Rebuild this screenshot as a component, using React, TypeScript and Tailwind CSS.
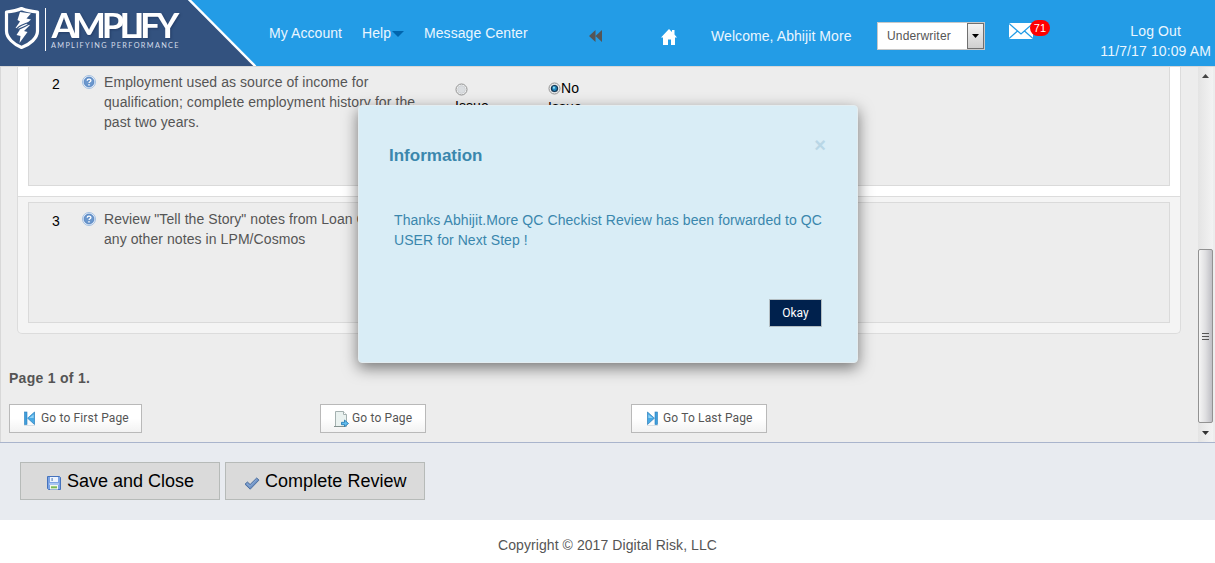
import type { ReactNode } from "react";

function Logo() {
  return (
    <svg className="block h-[66px] w-[257px] shrink-0 tracking-normal" viewBox="0 0 257 66">
      <polygon points="0,0 188,0 255,66 0,66" fill="#33527f" />
      <path d="M188.5 -1 L255.5 66.5" stroke="#fff" strokeWidth="2.4" />
      <path
        d="M21.5 8.500 C17 10.500 11 11.500 6.500 12 V31 C6.500 38 14 44.500 21.500 47.500 C30 44.500 37.500 38 37.500 31 V12 C32 11.500 26 10.500 21.500 8.500Z"
        fill="#33527f"
        stroke="#fff"
        strokeWidth="3.200"
        strokeLinejoin="round"
      />
      <path d="M20 12 L31 13.500 L26.500 18.500 L31 19.500 L26 24 L30 25 L24 31 L27.500 32 L19.500 43 L20.500 36 L16.500 35 L20 29.500 L15.500 28 L20 21.500 L17.500 20Z" fill="#fff" />
      <path d="M15.500 30.500 C17 27 25 23 31 22 C29 26 21 28 15.500 30.500" fill="none" stroke="#33527f" strokeWidth="1.200" />
      <path d="M45.500 8 V51" stroke="#fff" strokeWidth="1" />
      <g fontFamily="Lato, sans-serif">
        <text
          className="drop-shadow-[1px_1px_1px_rgba(20,40,80,0.5)]"
          transform="translate(51.500 38) scale(1.075 1)"
          fontSize="33.500"
          fontWeight="700"
          fill="#fff"
          textLength="119"
          lengthAdjust="spacing"
        >
          AMPLIFY
        </text>
        <text x="51" y="47.500" fontSize="7.300" fill="#d3dcea" textLength="127.500">AMPLIFYING PERFORMANCE</text>
      </g>
    </svg>
  );
}

function HelpIcon() {
  return (
    <svg className="mt-[3px] block size-[14px] shrink-0" viewBox="0 0 14 14">
      <circle cx="7" cy="7" r="6.500" fill="#e6effa" stroke="#a3bfe0" />
      <circle cx="7" cy="7" r="4.900" fill="#6b97cd" stroke="#4f7fbd" strokeWidth="0.800" />
      <path d="M5.200 5.700 C5.200 3.600 8.900 3.600 8.900 5.600 C8.900 6.800 7 6.800 7 8.100" fill="none" stroke="#fff" strokeWidth="1.300" />
      <rect x="6.300" y="9.100" width="1.400" height="1.400" fill="#fff" />
    </svg>
  );
}

function Radio({ checked = false }: { checked?: boolean }) {
  return (
    <svg className="block size-[13px] shrink-0" viewBox="0 0 13 13">
      <circle cx="6.500" cy="6.500" r="5.500" fill="#f6f6f6" stroke="#8e8f8f" />
      <circle cx="6.500" cy="6.500" r="3.900" fill="#dadde0" stroke="#c3c6ca" strokeWidth="0.600" />
      {checked && <circle cx="6.500" cy="6.500" r="3" fill="#2389c0" stroke="#123552" strokeWidth="1.200" />}
      {checked && <circle cx="5.900" cy="5.700" r="1.100" fill="#8fe0f8" />}
    </svg>
  );
}

function SkipIcon({ last = false }: { last?: boolean }) {
  return (
    <svg className={last ? "block h-[15px] w-[11px] -scale-x-100" : "block h-[15px] w-[11px]"} viewBox="0 0 11 15">
      <rect x="0.500" y="1" width="2.500" height="12.500" fill="#3f9fdc" stroke="#2b7ebc" strokeWidth="0.600" />
      <path d="M10.500 1 V13.500 L3.600 7.200Z" fill="#48a9e4" stroke="#2b7ebc" strokeWidth="0.700" />
      <path d="M9.600 3.400 V7 H5.200Z" fill="#91d2f5" />
      <path d="M0 14.500 H11" stroke="#d9e0e5" />
    </svg>
  );
}

function PageIcon() {
  return (
    <svg className="block size-4" viewBox="0 0 16 16">
      <path d="M2.500 0.500 H10.500 L13.500 3.500 V15.500 H2.500Z" fill="#eaf2f0" stroke="#a4b1b0" />
      <path d="M10.500 0.500 V3.500 H13.500" fill="#fff" stroke="#a4b1b0" />
      <path d="M1 15.500 H12" stroke="#84918f" />
      <path d="M8.500 11.300 H11.500 V9 L15.500 12.500 L11.500 15.700 V13.700 H8.500Z" fill="#60bced" stroke="#1c73b0" strokeWidth="0.800" />
    </svg>
  );
}

function SaveIcon() {
  return (
    <svg className="block size-[14px]" viewBox="0 0 14 14">
      <path d="M0.500 0.500 H12.500 L13.500 1.500 V13.500 H1.500 L0.500 12.500Z" fill="#7ba3e4" stroke="#4472bd" />
      <rect x="3" y="1" width="8" height="5" fill="#edf4ff" />
      <rect x="4.500" y="2" width="1.200" height="3" fill="#6689bc" />
      <rect x="2" y="7" width="10" height="2" fill="#a9c5f1" />
      <rect x="3" y="9" width="8" height="4.500" fill="#f3f8ed" />
      <rect x="4" y="10.300" width="6" height="2" fill="#79b957" />
    </svg>
  );
}

function CheckIcon() {
  return (
    <svg className="block h-[13px] w-4" viewBox="0 0 16 13">
      <path d="M1 7.200 L3.400 5 L6.100 7.500 L12.700 1 L15 3.100 L6.200 12.200Z" fill="#6f93c6" stroke="#4d6f9f" strokeWidth="1" strokeLinejoin="round" />
      <path d="M2.800 6.600 L6.100 9.300 L12.700 2.500" fill="none" stroke="#93b1da" strokeWidth="0.900" />
    </svg>
  );
}

function PagerButton({ className, icon, children }: { className: string; icon: ReactNode; children: ReactNode }) {
  return (
    <button className={`flex h-[29px] items-center border border-[#b9b9b9] bg-linear-to-b from-white from-50% to-[#f2f2f2] font-[Roboto,sans-serif] text-[12px] tracking-[0.15px] whitespace-nowrap text-[#555] ${className}`}>
      {icon}
      <span className="pb-[2px]">{children}</span>
    </button>
  );
}

function Header() {
  return (
    <header className="flex h-[66px] bg-[#239ce6] text-[14px] leading-5 tracking-[0.07px] text-[#eaf6ff]">
      <Logo />
      <nav className="flex w-[332px] shrink-0 pt-[23px] pl-3 whitespace-nowrap">
        <span className="w-[93px]">My Account</span>
        <span className="flex w-[62px]">
          Help
          <svg className="mt-2 ml-px block h-[6px] w-3" viewBox="0 0 12 6"><path d="M0 0 H12 L6 6Z" fill="#0065ae" /></svg>
        </span>
        <span>Message Center</span>
      </nav>
      <svg className="mt-[30px] block h-3 w-[13px] shrink-0" viewBox="0 0 13 12"><path d="M6.500 0 V12 L0 6Z M13 0 V12 L6.500 6Z" fill="#555" /></svg>
      <svg className="mt-[29px] ml-[59px] block h-4 w-4 shrink-0" viewBox="0 0 16 16"><path d="M8 0 L11 3 V1 H13.500 V5.500 L16 8.500 H14 V16 H10 V10.500 H7 V16 H2 V8.500 H0Z" fill="#fff" /></svg>
      <span className="mt-[26px] ml-[34px] w-[166px] shrink-0 whitespace-nowrap">Welcome, Abhijit More</span>
      <div className="mt-[22px] flex h-7 w-[108px] shrink-0 border border-[#c8c8c8] bg-white text-[12px] text-[#555]">
        <span className="grow pt-[3px] pl-[9px] tracking-[0.17px]">Underwriter</span>
        <div className="flex w-[17px] items-center justify-center border border-[#707070] bg-linear-to-b from-[#f4f4f4] to-[#cfcfcf]">
          <svg className="block h-1 w-[7px]" viewBox="0 0 7 4"><path d="M0 0 H7 L3.500 4Z" fill="#000" /></svg>
        </div>
      </div>
      <div className="relative mt-[23px] ml-6 h-4 w-6 shrink-0">
        <svg className="block h-4 w-6" viewBox="0 0 24 16">
          <rect width="24" height="16" fill="#fff" />
          <path d="M0 0.500 L12 11 L24 0.500 M0 15.500 L8.500 8 M24 15.500 L15.500 8" fill="none" stroke="#239ce6" strokeWidth="1.300" />
        </svg>
        <span className="absolute top-[-3px] left-[21px] flex h-4 w-5 items-center justify-center rounded-full bg-[#f00] text-[11px] leading-none text-white">71</span>
      </div>
      <div className="mt-[21px] mr-1 ml-auto text-center tracking-[0.12px] whitespace-nowrap">
        <div>Log Out</div>
        <div>11/7/17 10:09 AM</div>
      </div>
    </header>
  );
}

function Scrollbar() {
  return (
    <div className="mr-[2px] flex h-full w-[15px] shrink-0 flex-col items-center bg-linear-to-r from-[#e4e4e4] to-[#f3f3f3]">
      <svg className="mt-[7px] mb-[171px] block h-1 w-[7px] shrink-0" viewBox="0 0 7 4"><path d="M0 4 L3.500 0 L7 4Z" fill="#444" /></svg>
      <div className="flex h-[174px] w-[15px] shrink-0 flex-col items-center justify-center gap-[2px] rounded-[2px] border border-[#929292] bg-linear-to-r from-[#f5f5f5] via-[#dfdfe1] to-[#bfbfc5]">
        <div className="h-px w-[7px] bg-[#555]" />
        <div className="h-px w-[7px] bg-[#555]" />
        <div className="h-px w-[7px] bg-[#555]" />
      </div>
      <svg className="mt-2 block h-1 w-[7px] shrink-0" viewBox="0 0 7 4"><path d="M0 0 H7 L3.500 4Z" fill="#333" /></svg>
    </div>
  );
}

function Checklist() {
  return (
    <main className="flex h-[376px] justify-between overflow-hidden border-t border-l border-[#d8d8d8] bg-[#ededed] text-[14px] leading-5 tracking-[0.075px] text-[#555]">
      <div className="w-[1180px] shrink-0 pl-2">
        <section className="ml-2 w-[1164px] rounded-b-[5px] border-x border-b border-[#dcdcdc] bg-[#f4f4f4]">
          <div className="h-[129px] bg-white px-[10px]">
            <div className="flex h-[119px] border-x border-b border-[#dadada] bg-[#ededed] pt-[5px]">
              <span className="w-[53px] pt-[2px] pl-[23px] text-black">2</span>
              <HelpIcon />
              <p className="ml-2 w-[351px] whitespace-nowrap">Employment used as source of income for<br />qualification; complete employment history for the<br />past two years.</p>
              <div className="w-[93px] pt-[11px] text-black">
                <Radio />
                <div>Issue</div>
              </div>
              <div className="pt-[6px] text-black">
                <div className="flex items-center"><Radio checked />No</div>
                <div className="-mt-px">Issue</div>
              </div>
            </div>
          </div>
          <div className="h-[137px] border-t border-[#dcdcdc] px-[10px] pt-[5px]">
            <div className="flex h-[121px] border border-[#dadada] bg-[#ededed] pt-[6px]">
              <span className="w-[53px] pt-[2px] pl-[23px] text-black">3</span>
              <HelpIcon />
              <p className="ml-2 whitespace-nowrap">Review "Tell the Story" notes from Loan C<br />any other notes in LPM/Cosmos</p>
            </div>
          </div>
        </section>
        <div className="mt-[34px] font-bold tracking-[0.28px]">Page 1 of 1.</div>
        <div className="mt-4 flex">
          <PagerButton className="w-[133px] gap-[6px] pl-[14px]" icon={<SkipIcon />}>Go to First Page</PagerButton>
          <PagerButton className="ml-[178px] w-[106px] gap-[3px] pl-3" icon={<PageIcon />}>Go to Page</PagerButton>
          <PagerButton className="ml-[205px] w-[136px] gap-[5px] pl-[15px]" icon={<SkipIcon last />}>Go To Last Page</PagerButton>
        </div>
      </div>
      <Scrollbar />
    </main>
  );
}

function InformationDialog() {
  return (
    <div role="dialog" className="absolute top-[105px] left-[358px] flex h-[258px] w-[500px] flex-col rounded-[4px] border border-[#e3edf1] bg-[#d9edf6] px-[29px] text-[#3a87ad] shadow-[0_5px_15px_rgba(0,0,0,0.5)]">
      <div className="flex justify-between">
        <h2 className="mt-[38px] ml-px text-[17px] leading-6 font-bold">Information</h2>
        <button className="mt-[29px] mr-[2px] h-5 text-[20px] leading-5 font-bold text-[#b9d7e6]">×</button>
      </div>
      <p className="mt-[42px] ml-[6px] text-[14px] leading-5 tracking-[0.075px] whitespace-nowrap">Thanks Abhijit.More QC Checkist Review has been forwarded to QC<br />USER for Next Step !</p>
      <button className="mt-[49px] mr-[6px] h-7 w-[53px] self-end border border-[#b4bec2] bg-[#00214d] font-[Roboto,sans-serif] text-[12px] text-white">Okay</button>
    </div>
  );
}

export default function App() {
  return (
    <div className="relative h-[563px] w-[1215px] overflow-hidden bg-white font-['Liberation_Sans',Arial,sans-serif]">
      <Header />
      <Checklist />
      <div className="flex h-[78px] gap-[5px] border-t border-[#a9b4cc] bg-[#e8ebf0] pt-[19px] pl-5 text-[18px] text-black">
        <button className="flex h-[38px] w-[200px] items-center border border-[#b6bab8] bg-[#dadada] pl-[26px] whitespace-nowrap">
          <span className="mt-[3px] mr-[6px]"><SaveIcon /></span>Save and Close
        </button>
        <button className="flex h-[38px] w-[200px] items-center border border-[#b6bab8] bg-[#dadada] pl-[18px] tracking-[0.04px] whitespace-nowrap">
          <span className="mt-[5px] mr-[5px]"><CheckIcon /></span>Complete Review
        </button>
      </div>
      <footer className="pt-[15px] text-center text-[14px] leading-5 tracking-[0.07px] text-[#555]">Copyright © 2017 Digital Risk, LLC</footer>
      <InformationDialog />
    </div>
  );
}
